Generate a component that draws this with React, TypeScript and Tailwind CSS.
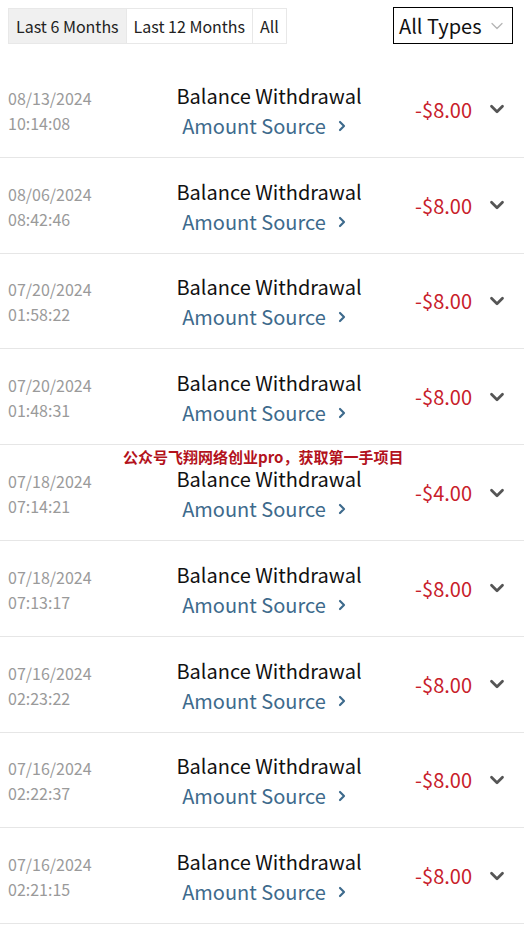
import { ChevronDown, ChevronRight } from "lucide-react";

type Txn = {
  date: string;
  time: string;
  amount: string;
};

const txns: Txn[] = [
  { date: "08/13/2024", time: "10:14:08", amount: "-$8.00" },
  { date: "08/06/2024", time: "08:42:46", amount: "-$8.00" },
  { date: "07/20/2024", time: "01:58:22", amount: "-$8.00" },
  { date: "07/20/2024", time: "01:48:31", amount: "-$8.00" },
  { date: "07/18/2024", time: "07:14:21", amount: "-$4.00" },
  { date: "07/18/2024", time: "07:13:17", amount: "-$8.00" },
  { date: "07/16/2024", time: "02:23:22", amount: "-$8.00" },
  { date: "07/16/2024", time: "02:22:37", amount: "-$8.00" },
  { date: "07/16/2024", time: "02:21:15", amount: "-$8.00" },
];

export default function App() {
  return (
    <div
      className="relative w-[524px] h-[927px] overflow-hidden bg-white"
      style={{ fontFamily: '"Noto Sans CJK SC", "Noto Sans", sans-serif' }}
    >
      {/* filter bar */}
      <div className="flex items-start justify-between h-[62px] pl-2 pr-[11px] pt-2">
        <div className="flex h-[36px] border border-[#e8e8e8] text-[16px] text-[#222]">
          <button className="px-[7px] bg-[#f0f0f0] leading-[34px]">Last 6 Months</button>
          <button className="px-[7px] border-l border-[#e8e8e8] leading-[34px]">Last 12 Months</button>
          <button className="px-[7px] border-l border-[#e8e8e8] leading-[34px]">All</button>
        </div>
        <div className="flex items-center h-[37px] w-[120px] -mt-[1px] border border-black pl-[5px] gap-[5px] whitespace-nowrap">
          <span className="text-[20px] text-[#111] leading-none">All Types</span>
          <ChevronDown size={20} strokeWidth={1.5} className="text-[#b5b5b5] shrink-0" />
        </div>
      </div>

      {/* list */}
      <div>
        {txns.map((t, i) => (
          <div key={i} className="flex items-center h-[95.8px] border-b border-[#e6e6e6]">
            <div className="w-[160px] pl-2 text-[16px] leading-[25px] text-[#9a9a9a] mt-[3px]">
              <div>{t.date}</div>
              <div>{t.time}</div>
            </div>
            <div className="w-[218px] flex flex-col items-center mt-[3px]">
              <div className="text-[20px] leading-[30px] text-[#111]">Balance Withdrawal</div>
              <div className="flex items-center gap-[8px] text-[20px] leading-[30px] text-[#3d6a8c] -ml-[6px]">
                <span>Amount Source</span>
                <ChevronRight size={16} strokeWidth={3.2} />
              </div>
            </div>
            <div className="w-[94px] text-right text-[20px] text-[#c8202a] mt-[1px]">{t.amount}</div>
            <div className="flex-1 flex justify-center pr-[2px]">
              <ChevronDown size={22} strokeWidth={3} className="text-[#555]" />
            </div>
          </div>
        ))}
      </div>

      {/* watermark */}
      <div className="absolute left-[123px] top-[446px] text-[15px] font-bold text-[#b3121c] leading-[22px] whitespace-nowrap">
        公众号飞翔网络创业pro，获取第一手项目
      </div>
    </div>
  );
}
